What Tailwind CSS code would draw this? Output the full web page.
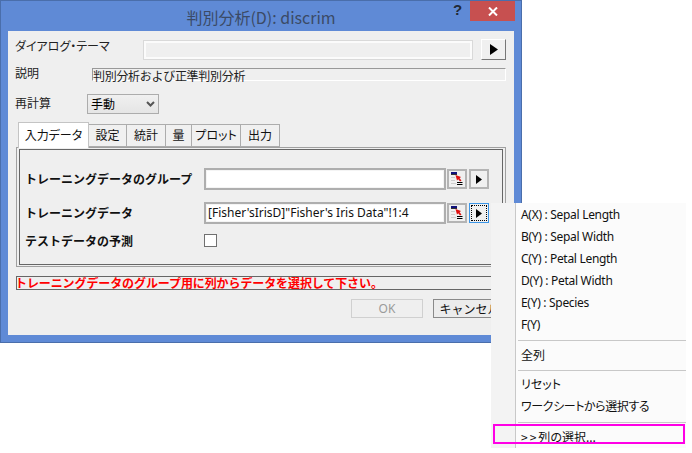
<!DOCTYPE html>
<html lang="ja">
<head>
    <meta charset="UTF-8">
    <title>判別分析</title>
    <script src="https://cdn.jsdelivr.net/npm/@tailwindcss/browser@4"></script>
</head>
<body class="bg-white">
    <div class="relative w-[692px] h-[453px] overflow-hidden bg-white text-[12px] leading-none text-black font-['Noto_Sans_CJK_JP','Noto_Sans',sans-serif]">

        <!-- dialog window -->
        <div class="absolute left-0 top-0 w-[522px] h-[343px] border border-[#4a6eab] bg-[#5f8ad6] px-[7px]">
            <div class="relative h-[30px] flex items-center justify-center">
                <span class="text-[16px] text-[#3b4a66] font-['Noto_Sans_CJK_JP',sans-serif] pt-[1px]">判別分析(D): discrim</span>
                <span class="absolute left-[445px] top-[1px] text-[15px] font-bold text-[#222a38] font-['Liberation_Sans',sans-serif]">?</span>
                <div class="absolute left-[462px] top-0 w-[45px] h-[20px] bg-[#c75050] flex items-center justify-center">
                    <svg width="10" height="9" viewBox="0 0 10 9"><path d="M1 0.5 L9 8.5 M9 0.5 L1 8.5" stroke="white" stroke-width="2"/></svg>
                </div>
            </div>

            <div class="h-[304px] w-[506px] bg-[#efefef] pl-[7px] pt-[8px]">
                <!-- theme -->
                <div class="flex h-[21px] items-center">
                    <span class="w-[128px] pb-[8px] text-[#222] [font-feature-settings:'palt']">ダイアログ・テーマ</span>
                    <div class="w-[330px] h-[20px] border border-[#d9d9d9] bg-[#efefef] shadow-[inset_0_0_0_2px_#fbfbfb]"></div>
                    <button class="ml-[8px] w-[25px] h-[21px] flex items-center justify-center border border-t-white border-l-white border-r-[#777] border-b-[#777] bg-[#f0f0f0]">
                        <svg width="8" height="11" viewBox="0 0 8 11"><path d="M0 0 L8 5.5 L0 11 Z" fill="black"/></svg>
                    </button>
                </div>
                <!-- description -->
                <div class="flex h-[13px] mt-[8px] items-center">
                    <span class="w-[77px] pb-[4px] text-[#222]">説明</span>
                    <div class="w-[414px] h-[13px] border border-t-[#999] border-l-[#999] border-r-white border-b-white flex items-center pt-[2px] text-[#222] tracking-[-0.3px]">判別分析および正準判別分析</div>
                </div>
                <!-- recalc -->
                <div class="flex h-[20px] mt-[13px] items-center">
                    <span class="w-[72px] pb-[2px] text-[#222]">再計算</span>
                    <div class="w-[72px] h-[20px] border border-[#acacac] bg-gradient-to-b from-[#f0f0f0] to-[#e5e5e5] flex items-center justify-between pl-[3px] pr-[3px]">
                        <span>手動</span>
                        <svg width="9" height="6" viewBox="0 0 9 6"><path d="M1 1 L4.5 4.5 L8 1" fill="none" stroke="#555" stroke-width="2"/></svg>
                    </div>
                </div>

                <!-- tabs -->
                <div class="relative z-10 flex items-end h-[26px] mt-[8px] ml-[3px] text-[#111] [font-feature-settings:'palt']">
                    <div class="w-[71px] h-[26px] pb-[1px] bg-white border border-b-0 border-[#c4c4c4] flex items-center justify-center">入力データ</div>
                    <div class="w-[38px] h-[23px] mb-[1px] pb-[1px] bg-[#f0f0f0] border border-l-0 border-[#acacac] flex items-center justify-center">設定</div>
                    <div class="w-[39px] h-[23px] mb-[1px] pb-[1px] bg-[#f0f0f0] border border-l-0 border-[#acacac] flex items-center justify-center">統計</div>
                    <div class="w-[26px] h-[23px] mb-[1px] pb-[1px] bg-[#f0f0f0] border border-l-0 border-[#acacac] flex items-center justify-center">量</div>
                    <div class="w-[49px] h-[23px] mb-[1px] pb-[1px] bg-[#f0f0f0] border border-l-0 border-[#acacac] flex items-center justify-center">プロット</div>
                    <div class="w-[39px] h-[23px] mb-[1px] pb-[1px] bg-[#f0f0f0] border border-l-0 border-[#acacac] flex items-center justify-center">出力</div>
                </div>

                <!-- panel -->
                <div class="ml-[1px] -mt-[1px] w-[490px] h-[120px] border border-[#a0a0a0] pt-[1px] px-[2px]">
                    <div class="h-[116px] border border-[#666] pl-[5px] pt-[18px] font-bold text-[#111]">
                        <div class="flex h-[22px] items-center">
                            <span class="w-[179px]">トレーニングデータのグループ</span>
                            <div class="w-[242px] h-[22px] border-2 border-[#aeaeae] shadow-[inset_0_0_0_1px_#f4f4f4] bg-white"></div>
                            <button class="ml-[1px] w-[20px] h-[20px] border-2 border-[#b4b4b4] bg-[#f0f0f0] flex items-center justify-center">
                                <svg width="12" height="14" viewBox="0 0 12 14"><rect x="0" y="0" width="6" height="2" fill="#10107a"/><path d="M0 2.5 H6" stroke="#333"/><path d="M0 5.5 H4 M0 8.5 H4 M0 11.5 H5" stroke="#ccc"/><path d="M4.5 3 L10 5 L8.6 6.2 L10.5 8.5 L9 9.5 L7.3 7.3 L6 8.5 Z" fill="#e01010"/><path d="M6 10.5 H11.5 M6 12.5 H11.5" stroke="black"/></svg>
                            </button>
                            <button class="ml-[2px] w-[20px] h-[20px] border-2 border-[#b4b4b4] bg-[#f0f0f0] flex items-center justify-center">
                                <svg width="6" height="9" viewBox="0 0 6 9"><path d="M0 0 L6 4.5 L0 9 Z" fill="black"/></svg>
                            </button>
                        </div>
                        <div class="flex h-[22px] mt-[12px] items-center">
                            <span class="w-[179px]">トレーニングデータ</span>
                            <div class="w-[242px] h-[22px] border-2 border-[#aeaeae] shadow-[inset_0_0_0_1px_#f4f4f4] bg-white flex items-center pl-[2px] font-normal text-[12px] font-['Noto_Sans',sans-serif]">[Fisher'sIrisD]"Fisher's Iris Data"!1:4</div>
                            <button class="ml-[1px] w-[20px] h-[20px] border-2 border-[#b4b4b4] bg-[#f0f0f0] flex items-center justify-center">
                                <svg width="12" height="14" viewBox="0 0 12 14"><rect x="0" y="0" width="6" height="2" fill="#10107a"/><path d="M0 2.5 H6" stroke="#333"/><path d="M0 5.5 H4 M0 8.5 H4 M0 11.5 H5" stroke="#ccc"/><path d="M4.5 3 L10 5 L8.6 6.2 L10.5 8.5 L9 9.5 L7.3 7.3 L6 8.5 Z" fill="#e01010"/><path d="M6 10.5 H11.5 M6 12.5 H11.5" stroke="black"/></svg>
                            </button>
                            <button class="ml-[2px] w-[20px] h-[20px] border border-[#3c96e8] bg-[#f0f0f0] p-[1px]">
                                <span class="w-full h-full border border-dotted border-black flex items-center justify-center">
                                    <svg width="6" height="9" viewBox="0 0 6 9"><path d="M0 0 L6 4.5 L0 9 Z" fill="black"/></svg>
                                </span>
                            </button>
                        </div>
                        <div class="flex h-[13px] mt-[10px] items-center">
                            <span class="w-[179px]">テストデータの予測</span>
                            <div class="w-[13px] h-[13px] border border-[#707070] bg-white"></div>
                        </div>
                    </div>
                </div>

                <!-- message -->
                <div class="ml-[1px] mt-[9px] w-[490px] h-[14px] border border-[#666] flex items-center font-bold text-[#ff0000] whitespace-nowrap tracking-[-0.1px]"><span class="-ml-[2px]">トレーニングデータのグループ用に列からデータを選択して下さい。</span></div>

                <!-- buttons -->
                <div class="flex mt-[9px] ml-[336px]">
                    <div class="w-[72px] h-[19px] border border-[#d0d0d0] bg-[#efefef] flex items-center justify-center text-[#9a9a9a] font-['Noto_Sans',sans-serif]">OK</div>
                    <div class="ml-[10px] w-[73px] h-[19px] border border-[#8a8a8a] bg-[#ececec] flex items-center justify-center text-[#111]">キャンセル</div>
                </div>
            </div>
        </div>

        <!-- popup menu -->
        <div class="absolute left-[491px] top-[203px] w-[195px] h-[245px] bg-[#fbfbfb] text-[#111]">
            <div class="absolute left-0 top-0 w-[25px] h-full bg-[#f3f3f3] border-r border-[#c8c8c8]"></div>
            <div class="relative pl-[30px] font-['Noto_Sans','Noto_Sans_CJK_JP',sans-serif]">
                <div class="h-[22px] mt-[1px] flex items-center tracking-[-0.3px]">A(X) : Sepal Length</div>
                <div class="h-[22px] flex items-center tracking-[-0.3px]">B(Y) : Sepal Width</div>
                <div class="h-[22px] flex items-center tracking-[-0.3px]">C(Y) : Petal Length</div>
                <div class="h-[22px] flex items-center tracking-[-0.3px]">D(Y) : Petal Width</div>
                <div class="h-[22px] flex items-center tracking-[-0.3px]">E(Y) : Species</div>
                <div class="h-[22px] flex items-center tracking-[-0.3px]">F(Y)</div>
                <div class="h-px mt-[4px] mb-[3px] -ml-[3px] bg-[#c8c8c8]"></div>
                <div class="h-[22px] flex items-center font-['Noto_Sans_CJK_JP',sans-serif]">全列</div>
                <div class="h-px mt-[4px] mb-[2px] -ml-[3px] bg-[#c8c8c8]"></div>
                <div class="h-[22px] flex items-center font-['Noto_Sans_CJK_JP',sans-serif] [font-feature-settings:'palt']">リセット</div>
                <div class="h-[22px] flex items-center font-['Noto_Sans_CJK_JP',sans-serif] [font-feature-settings:'palt'] tracking-[-0.4px]">ワークシートから選択する</div>
                <div class="h-px mt-[5px] mb-[3px] -ml-[3px] bg-[#c8c8c8]"></div>
                <div class="h-[22px] flex items-center font-['Noto_Sans_CJK_JP',sans-serif] [font-feature-settings:'palt']"><span class="tracking-[2px]">&gt;&gt;</span>列の選択...</div>
            </div>
            <!-- highlight -->
            <div class="absolute left-[2px] top-[221px] w-[192px] h-[20px] border-2 border-[#ff00e6]"></div>
        </div>
    </div>
</body>
</html>
